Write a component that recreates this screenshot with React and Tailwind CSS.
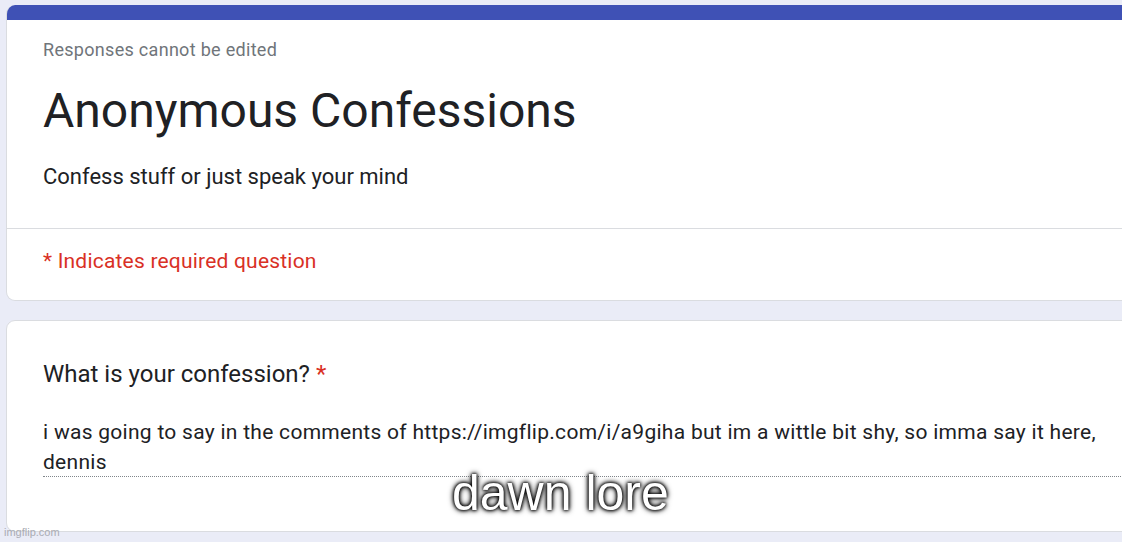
export default function App() {
  return (
    <div className="relative h-[542px] w-[1122px] overflow-hidden bg-[#eaecf7] font-['Roboto',sans-serif]">
      <div className="flex w-[1200px] flex-col gap-[19px] pl-[6px] pt-[5px]">
        <section className="overflow-hidden rounded-[9px] border border-[#dadce0] border-t-0 bg-white">
          <div className="h-[15px] bg-[#3f51b5]"></div>
          <div className="pl-[36px] pt-[18px]">
            <p className="text-[18px] leading-[24px] tracking-[0.3px] text-[#70757a]">Responses cannot be edited</p>
            <h1 className="mt-[22px] text-[48px] leading-[54px] text-[#202124]">Anonymous Confessions</h1>
            <p className="mt-[25px] text-[22px] leading-[28px] text-[#202124]">Confess stuff or just speak your mind</p>
          </div>
          <div className="mt-[37px] border-t border-[#dadce0] pl-[36px] pb-[25px] pt-[18px]">
            <p className="text-[21px] leading-[28px] tracking-[0.2px] text-[#d93025]">* Indicates required question</p>
          </div>
        </section>

        <section className="rounded-[9px] border border-[#dadce0] bg-white pl-[36px] pb-[54px] pt-[38px]">
          <p className="text-[24px] leading-[30px] text-[#202124]">
            What is your confession? <span className="text-[#d93025]">*</span>
          </p>
          <div className="mt-[28px] border-b border-dotted border-[#80868b] text-[21px] leading-[30px] tracking-[0.28px] text-[#202124]">
            i was going to say in the comments of https://imgflip.com/i/a9giha but im a wittle bit shy, so imma say it here,
            <br />
            <span className="block -mb-[1px]">dennis</span>
          </div>
        </section>
      </div>

      <div className="absolute left-[452px] top-[465px] font-['Liberation_Sans',Arial,sans-serif] text-[50px] leading-[56px] text-white [text-shadow:0_0_3px_#000,0_0_4px_#000,0_0_6px_#000]">
        dawn lore
      </div>
      <div className="absolute bottom-[3px] left-[4px] font-['Liberation_Sans',Arial,sans-serif] text-[11px] leading-[14px] text-[#a9abb3]">
        imgflip.com
      </div>
    </div>
  )
}
